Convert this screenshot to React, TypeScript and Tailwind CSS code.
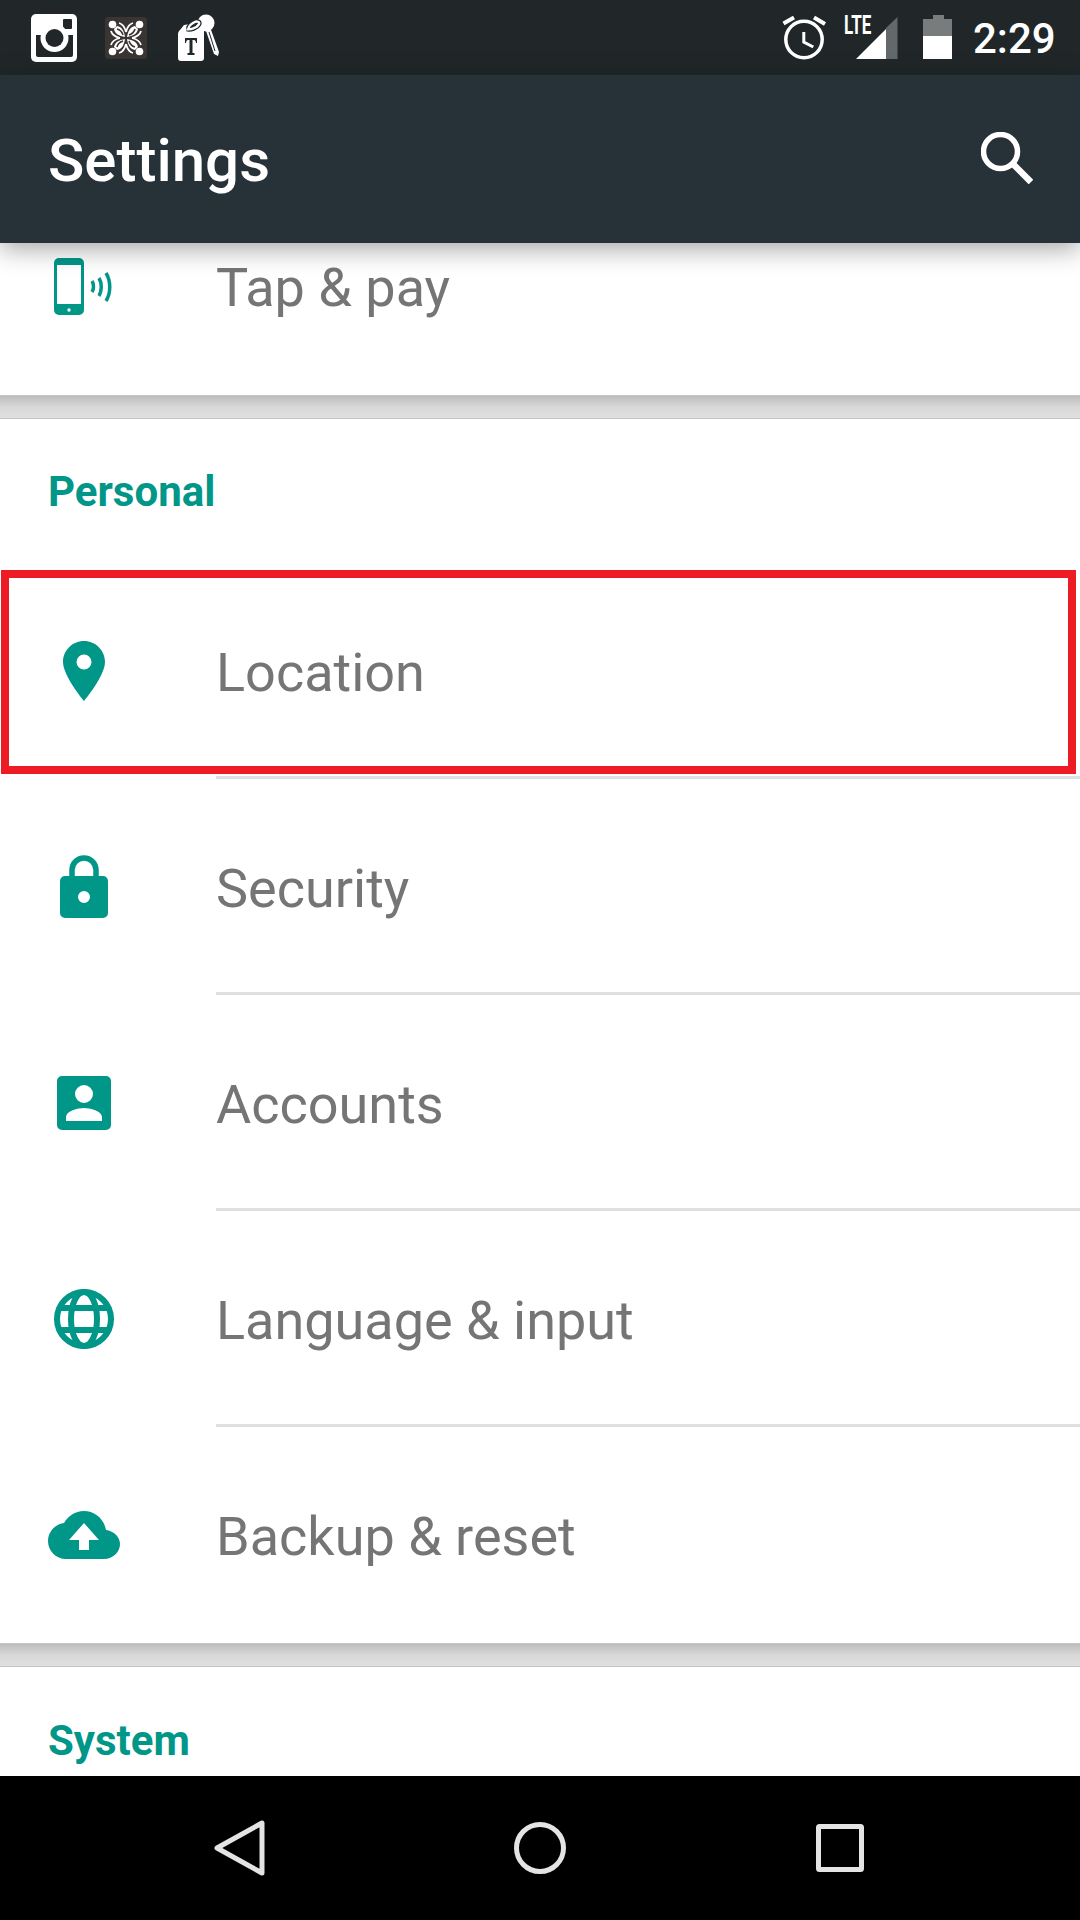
import type { ReactNode } from "react";

const TEAL = "#009688";
const BAR = "#212729";

function Petal({ angle }: { angle: number }) {
  return (
    <g transform={`rotate(${angle} 21 21)`}>
      <circle cx="7.500" cy="7.500" r="3.800" fill="#fff" />
      <path fill="#fff" d="M20 20C19 14 17 10 12 9l-3 3c1 5 5 7 11 8z" />
      <path fill="none" stroke="#3a3433" strokeWidth="1.600" d="M12 12c4 1 5 3 6 6" />
      <path fill="none" stroke="#fff" strokeWidth="1.800" d="M14 6c4 1 6 5 7 9" />
      <path fill="none" stroke="#fff" strokeWidth="1.800" d="M6 14c1 4 5 6 9 7" />
    </g>
  );
}

function StatusIcons() {
  return (
    <>
      <svg width="46" height="48" viewBox="0 0 46 48" className="absolute left-[31px] top-[14px]">
        <rect width="46" height="48" rx="5" fill="#fff" />
        <rect x="32" y="5" width="9" height="10" rx="1" fill={BAR} />
        <path fill={BAR} d="M5 21h37v20a2 2 0 0 1-2 2H7a2 2 0 0 1-2-2z" />
        <path fill="#fff" d="M5 17h37v4H5z" />
        <circle cx="23.500" cy="24" r="14" fill="#fff" />
        <circle cx="23.500" cy="24" r="9" fill={BAR} />
      </svg>
      <svg width="42" height="42" viewBox="0 0 42 42" className="absolute left-[105px] top-[17px]">
        <rect width="42" height="42" rx="3" fill="#3a3433" />
        <Petal angle={0} />
        <Petal angle={90} />
        <Petal angle={180} />
        <Petal angle={270} />
      </svg>
      <svg width="44" height="48" viewBox="0 0 44 48" className="absolute left-[176px] top-[14px]">
        <path fill="#fff" d="M29 14l5-1 9 25-1 4-4-2z" />
        <path stroke={BAR} strokeWidth="1" fill="none" d="M33 18l6 19" />
        <circle cx="30" cy="9" r="8.500" fill="#fff" />
        <path fill="#fff" d="M8 11l14-2c3 0 6 3 6 6v29a3 3 0 0 1-3 3H5a3 3 0 0 1-3-3V20c0-2 1-3 2-4z" />
        <path fill="none" stroke={BAR} strokeWidth="5" d="M11 15c3 1 10-1 12-5 1-3-3-3-6-1s-5 4-4 6" />
        <path fill="none" stroke="#fff" strokeWidth="2.500" d="M11 15c3 1 10-1 12-5 1-3-3-3-6-1s-5 4-4 6" />
        <path fill={BAR} d="M9 24h12v5h-1c0-2-1-3-2-3h-1.500v13h2v2h-7v-2h2V26H12c-1 0-2 1-2 3H9z" />
      </svg>

      <svg width="44" height="46" viewBox="0 0 44 46" className="absolute left-[782px] top-[15px]">
        <circle cx="22" cy="24.500" r="18.200" fill="none" stroke="#fff" strokeWidth="3.500" />
        <path d="M21.800 17v10l9.500 5" fill="none" stroke="#fff" strokeWidth="3" />
        <path d="M1.500 8.500L12 2.500M32 2.500L43 9" stroke="#fff" strokeWidth="4" />
      </svg>
      <span className="absolute left-[844px] top-[13px] font-['Roboto',sans-serif] text-[25px] leading-[26px] font-bold text-white scale-x-[0.68] origin-left">
        LTE
      </span>
      <svg width="43" height="43" viewBox="0 0 43 43" className="absolute left-[855px] top-[16px]">
        <path d="M42.500 1v42H31V12z" fill="#63686a" />
        <path d="M31 13v30H1z" fill="#fff" />
      </svg>
      <svg width="29" height="44" viewBox="0 0 29 44" className="absolute left-[923px] top-[15px]">
        <path d="M10 0h11v4h8v17H0V4h10z" fill="#787c7d" />
        <rect y="21" width="29" height="23" fill="#fff" />
      </svg>
      <span className="absolute left-[973px] top-[17px] font-['Roboto',sans-serif] text-[42px] leading-[44px] font-medium text-white">
        2:29
      </span>
    </>
  );
}

function TapPayIcon() {
  return (
    <svg width="58" height="57" viewBox="0 0 58 57">
      <rect x="0" y="0" width="30" height="57" rx="5" fill={TEAL} />
      <rect x="3" y="7" width="24" height="39" fill="#fff" />
      <circle cx="15" cy="52" r="1.700" fill="#fff" />
      <g fill="none" stroke={TEAL} strokeWidth="3.500">
        <path d="M38 23c2 3 2 8 0 11" />
        <path d="M45 20c3 5 3 13 0 18" />
        <path d="M52 15c5 8 5 20 0 28" />
      </g>
    </svg>
  );
}

function LocationIcon() {
  return (
    <svg width="42" height="60" viewBox="0 0 42 60">
      <path fill={TEAL} fillRule="evenodd" d="M21 0C9.400 0 0 9.400 0 21c0 14 21 39 21 39s21-25 21-39C42 9.400 32.600 0 21 0zm0 28.500a7.500 7.500 0 1 1 0-15 7.500 7.500 0 0 1 0 15z" />
    </svg>
  );
}

function LockIcon() {
  return (
    <svg width="48" height="63" viewBox="0 0 48 63">
      <path fill="none" stroke={TEAL} strokeWidth="5.500" d="M12 24V15a12 12 0 0 1 24 0v9" />
      <path fill={TEAL} fillRule="evenodd" d="M5 21h38a5 5 0 0 1 5 5v32a5 5 0 0 1-5 5H5a5 5 0 0 1-5-5V26a5 5 0 0 1 5-5zm19 15a6 6 0 1 0 0 12 6 6 0 0 0 0-12z" />
    </svg>
  );
}

function AccountIcon() {
  return (
    <svg width="54" height="54" viewBox="0 0 54 54">
      <path fill={TEAL} fillRule="evenodd" d="M5 0h44a5 5 0 0 1 5 5v44a5 5 0 0 1-5 5H5a5 5 0 0 1-5-5V5a5 5 0 0 1 5-5zm22 9a9 9 0 1 0 0 18 9 9 0 0 0 0-18zM9 45h36v-4c0-6-12-9-18-9S9 35 9 41z" />
    </svg>
  );
}

function GlobeIcon() {
  return (
    <svg width="60" height="60" viewBox="0 0 60 60" fill="none" stroke={TEAL} strokeWidth="6">
      <circle cx="30" cy="30" r="27" />
      <ellipse cx="30" cy="30" rx="13" ry="27" />
      <path d="M5 19h50M5 41h50" />
    </svg>
  );
}

function BackupIcon() {
  return (
    <svg width="72" height="48" viewBox="0 0 72 48">
      <path fill={TEAL} d="M58 19C56 8 47 0 36 0c-9 0-16 5-20 12C7 13 0 21 0 30c0 10 8 18 18 18h38c9 0 16-7 16-15 0-7-6-13-14-14z" />
      <path fill="#fff" d="M36 12l15 17H41v10H31V29H21z" />
    </svg>
  );
}

const rows = [
  { label: "Location", icon: <LocationIcon /> },
  { label: "Security", icon: <LockIcon /> },
  { label: "Accounts", icon: <AccountIcon /> },
  { label: "Language & input", icon: <GlobeIcon /> },
  { label: "Backup & reset", icon: <BackupIcon /> },
];

function Row({ label, icon }: { label: string; icon: ReactNode }) {
  return (
    <div className="h-[213px] flex items-center">
      <div className="w-[168px] shrink-0 flex justify-center pt-[2px]">{icon}</div>
      <span className="ml-[48px] pt-[6px] text-[54px] leading-[64px] text-[#757575]">{label}</span>
    </div>
  );
}

function Gap() {
  return <div className="h-[24px] border-y border-[#c4c4c4] bg-gradient-to-b from-[#bdbdbd] via-[#d8d8d8] to-[#e0e0e0]" />;
}

export default function App() {
  return (
    <div className="relative w-[1080px] h-[1920px] overflow-hidden bg-white font-['Roboto',sans-serif]">
      <div className="relative h-[75px] bg-[#212729]">
        <StatusIcons />
      </div>
      <div className="relative z-10 h-[168px] bg-[#263238] flex items-center justify-between pl-[48px] pr-[47px] shadow-[0_6px_24px_rgba(0,0,0,0.35)]">
        <h1 className="pt-[4px] text-[60px] leading-[70px] font-medium text-white">Settings</h1>
        <svg width="52" height="52" viewBox="0 0 52 52" fill="none" stroke="#fff" className="mb-[2px]">
          <circle cx="19.500" cy="19.500" r="17" strokeWidth="5.500" />
          <path d="M31 31l19 19" strokeWidth="6.500" />
        </svg>
      </div>

      <div className="h-[152px] flex items-start">
        <div className="w-[216px] shrink-0 pl-[54px] pt-[15px]">
          <TapPayIcon />
        </div>
        <span className="text-[54px] leading-[64px] text-[#757575] pt-[13px]">Tap &amp; pay</span>
      </div>
      <Gap />

      <div className="h-[144px] pl-[48px] pt-[48px] text-[42px] leading-[50px] font-bold text-[#009688]">Personal</div>

      <div className="pb-[3px]">
        {rows.map((r, i) => (
          <div key={r.label}>
            {i > 0 && <div className="h-[3px] ml-[216px] bg-[#e0e0e0]" />}
            <Row label={r.label} icon={r.icon} />
          </div>
        ))}
      </div>
      <Gap />

      <div className="pl-[48px] pt-[49px] text-[42px] leading-[50px] font-bold text-[#009688]">System</div>

      <div className="absolute left-[1px] top-[570px] w-[1075px] h-[204px] border-[8px] border-[#ed1c24]" />

      <div className="absolute left-0 bottom-0 w-full h-[144px] bg-black flex items-center">
        <svg width="52" height="56" viewBox="0 0 52 56" className="ml-[214px]" fill="none" stroke="#e4e4e4" strokeWidth="5" strokeLinejoin="round">
          <path d="M48 3v50L3 28z" />
        </svg>
        <svg width="52" height="52" viewBox="0 0 52 52" className="ml-[248px]" fill="none" stroke="#e4e4e4" strokeWidth="5">
          <circle cx="26" cy="26" r="23.500" />
        </svg>
        <svg width="48" height="48" viewBox="0 0 48 48" className="ml-[250px]" fill="none" stroke="#e4e4e4" strokeWidth="5" strokeLinejoin="round">
          <rect x="2.500" y="2.500" width="43" height="43" rx="1" />
        </svg>
      </div>
    </div>
  );
}
